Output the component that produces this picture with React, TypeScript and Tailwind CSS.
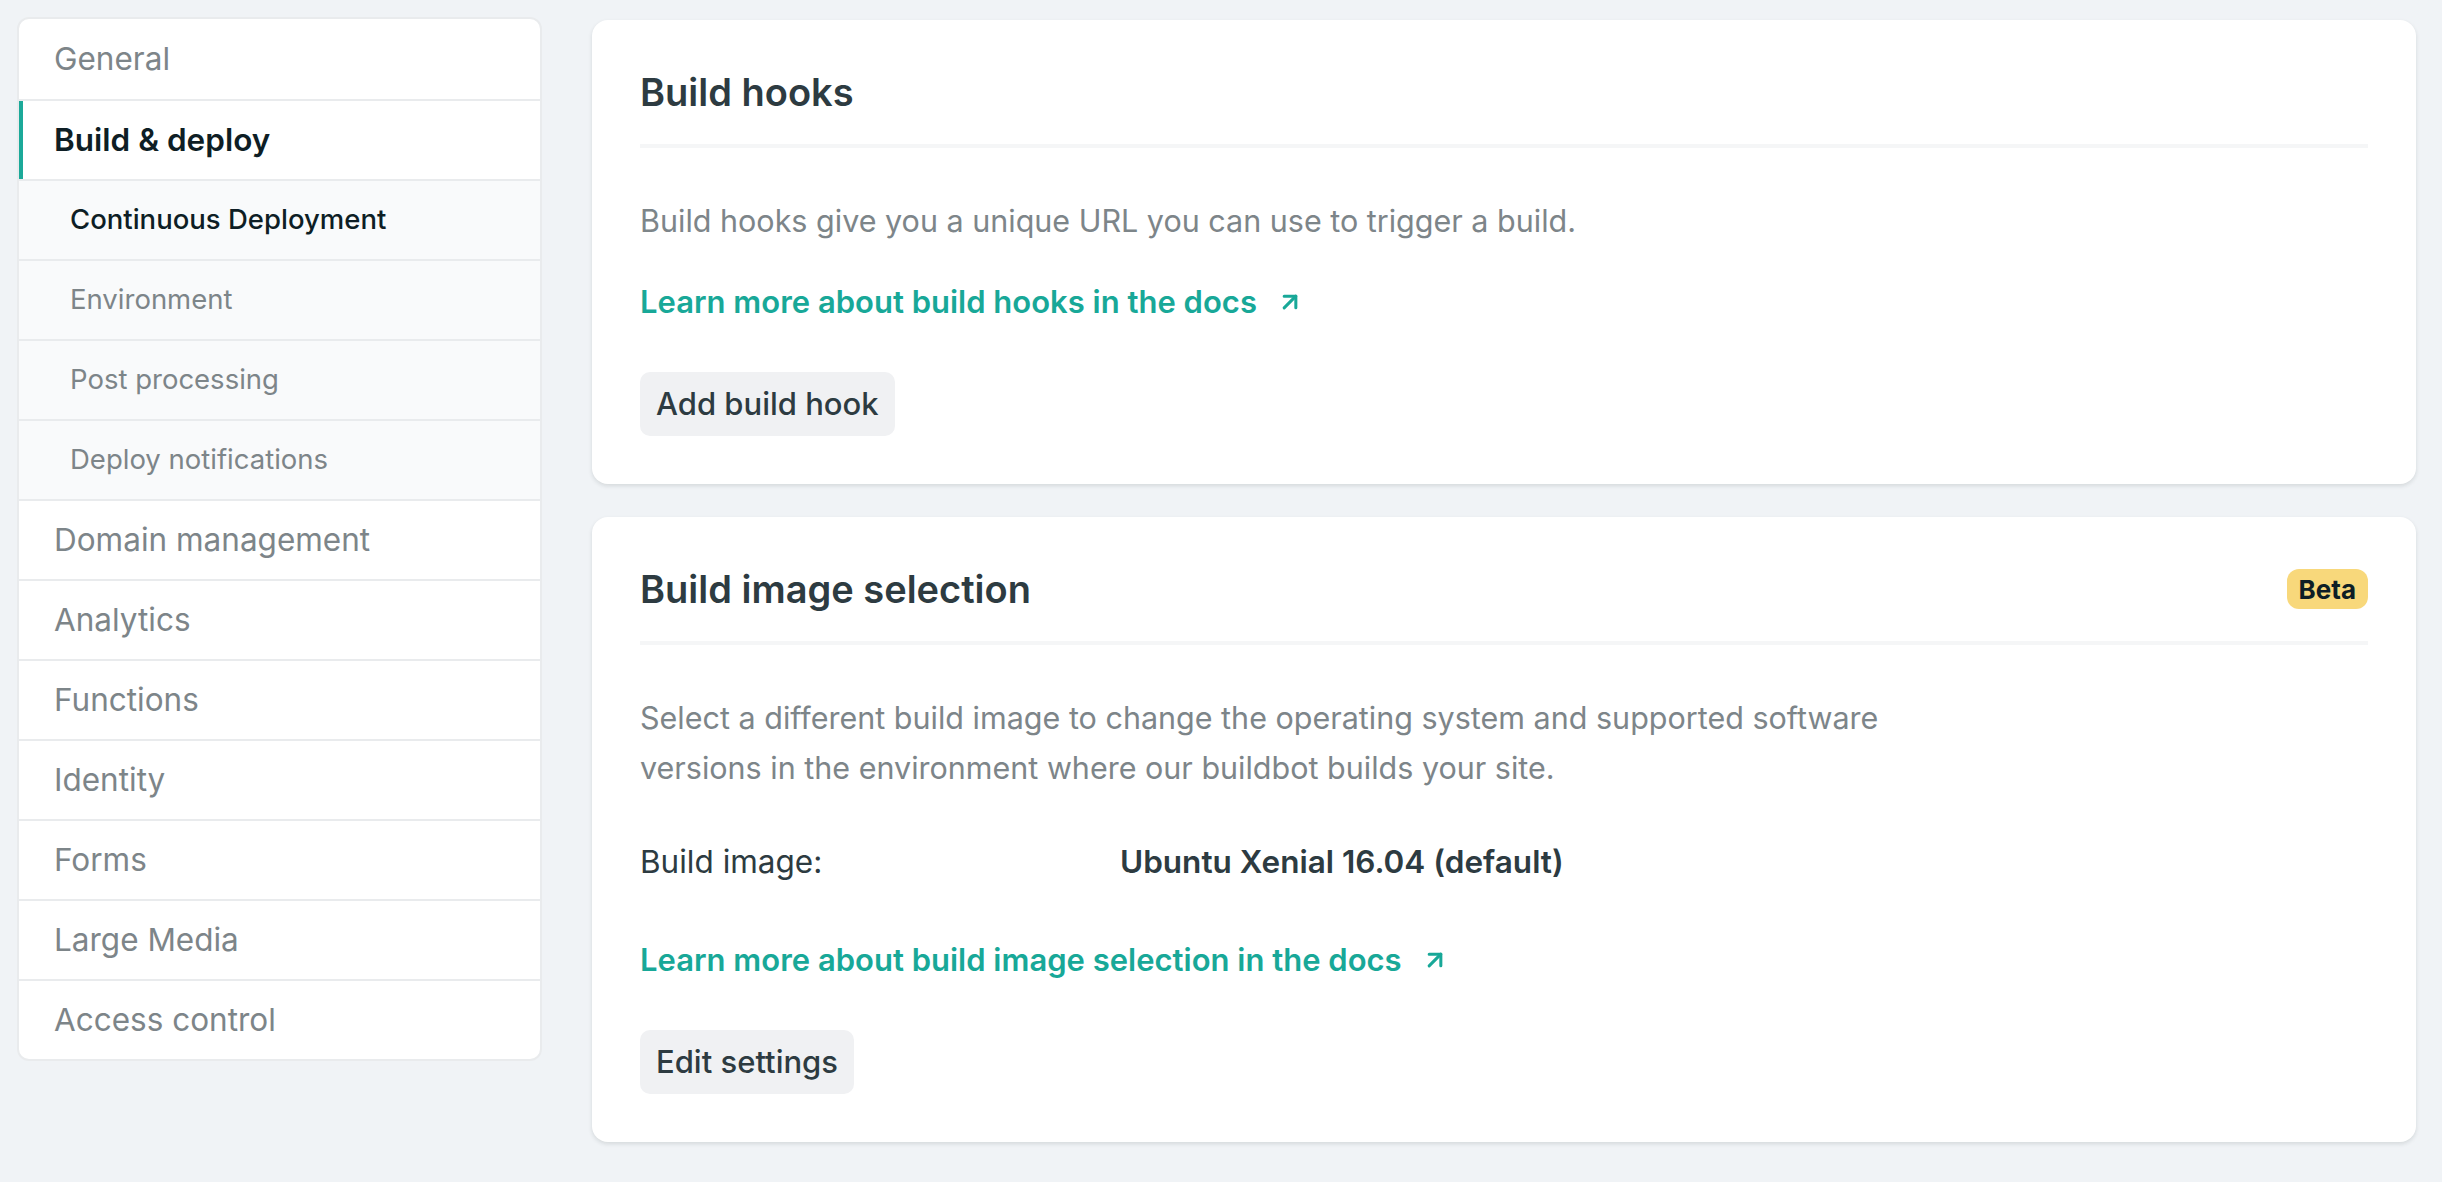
import { ArrowUpRight } from 'lucide-react'

type NavItem = {
  label: string
  sub?: boolean
  active?: boolean
  current?: boolean
}

const navItems: NavItem[] = [
  { label: 'General' },
  { label: 'Build & deploy', active: true },
  { label: 'Continuous Deployment', sub: true, current: true },
  { label: 'Environment', sub: true },
  { label: 'Post processing', sub: true },
  { label: 'Deploy notifications', sub: true },
  { label: 'Domain management' },
  { label: 'Analytics' },
  { label: 'Functions' },
  { label: 'Identity' },
  { label: 'Forms' },
  { label: 'Large Media' },
  { label: 'Access control' },
]

function Sidebar() {
  return (
    <nav className="w-[525px] shrink-0 self-start overflow-hidden rounded-[12px] border-2 border-[#e9ebed] bg-white">
      {navItems.map((item, i) => (
        <a
          key={item.label}
          href="#"
          className={`flex h-[80px] items-center ${i > 0 ? 'border-t-2 border-[#e9ebed]' : 'h-[78px]'} ${
            item.sub ? 'bg-[#f9fafb] pl-[51px] text-[27.5px]' : 'pl-[35px] text-[31.5px]'
          } ${item.active ? 'font-semibold text-[#0e1e25] shadow-[inset_4px_0_0_#1ba999]' : ''} ${
            item.current ? 'font-medium text-[#0e1e25]' : ''
          } ${!item.active && !item.current ? 'text-[#7d8589]' : ''}`}
        >
          {item.label}
        </a>
      ))}
    </nav>
  )
}

function DocsLink({ children }: { children: React.ReactNode }) {
  return (
    <a href="#" className="inline-flex items-center text-[31px] font-semibold leading-[50px] text-[#18a898]">
      {children}
      <ArrowUpRight className="ml-[19px] h-[28px] w-[28px]" strokeWidth={2.6} />
    </a>
  )
}

function Button({ children }: { children: React.ReactNode }) {
  return (
    <button className="h-[64px] rounded-[10px] bg-[#f0f1f3] px-[16px] text-[31px] font-medium text-[#2d3b41]">
      {children}
    </button>
  )
}

function Card({ title, badge, children }: { title: string; badge?: string; children: React.ReactNode }) {
  return (
    <section className="rounded-[16px] bg-white px-[48px] py-[48px] shadow-[0_2px_4px_rgba(14,30,37,0.12)]">
      <div className="flex items-center justify-between border-b-4 border-[#f5f6f7] pb-[28px]">
        <h2 className="text-[38px] font-semibold leading-[48px] text-[#2d3b41]">{title}</h2>
        {badge && (
          <span className="flex h-[40px] items-center rounded-[12px] bg-[#f8d87b] px-[12px] text-[26px] font-bold text-[#0e1e25]">
            {badge}
          </span>
        )}
      </div>
      <div className="pt-[48px]">{children}</div>
    </section>
  )
}

export default function App() {
  return (
    <div
      className="flex min-h-screen bg-[#f0f3f6] pl-[17px] pr-[26px] pt-[17px] pb-[40px]"
      style={{ fontFamily: 'Inter, "Noto Sans", sans-serif' }}
    >
      <Sidebar />

      <main className="ml-[50px] mt-[3px] flex flex-1 flex-col gap-[33px]">
        <Card title="Build hooks">
          <p className="text-[30.5px] leading-[50px] text-[#7d8589]">
            Build hooks give you a unique URL you can use to trigger a build.
          </p>
          <div className="mt-[31px]">
            <DocsLink>Learn more about build hooks in the docs</DocsLink>
          </div>
          <div className="mt-[45px]">
            <Button>Add build hook</Button>
          </div>
        </Card>

        <Card title="Build image selection" badge="Beta">
          <p className="max-w-[1300px] text-[30.5px] leading-[50px] text-[#7d8589]">
            Select a different build image to change the operating system and supported software versions in the
            environment where our buildbot builds your site.
          </p>
          <dl className="mt-[44px] grid grid-cols-[480px_1fr] text-[31.5px] leading-[50px] text-[#2d3b41]">
            <dt>Build image:</dt>
            <dd className="font-semibold">Ubuntu Xenial 16.04 (default)</dd>
          </dl>
          <div className="mt-[48px]">
            <DocsLink>Learn more about build image selection in the docs</DocsLink>
          </div>
          <div className="mt-[45px]">
            <Button>Edit settings</Button>
          </div>
        </Card>
      </main>
    </div>
  )
}
